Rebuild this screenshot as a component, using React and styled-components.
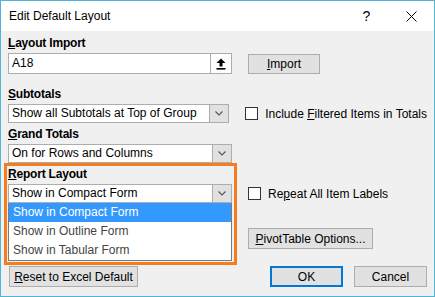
import React from 'react';
import styled, { createGlobalStyle } from 'styled-components';

const GlobalStyle = createGlobalStyle`
  html, body {
    margin: 0;
    padding: 0;
    background: #ffffff;
  }
  body {
    font-family: "Liberation Sans", Arial, sans-serif;
    font-size: 12px;
    color: #000;
  }
`;

const Dialog = styled.div`
  width: 435px;
  height: 297px;
  box-sizing: border-box;
  border: 1px solid #4fb4d8;
  background: #f0f0f0;
  display: flex;
  flex-direction: column;
`;

const TitleBar = styled.div`
  height: 30px;
  background: #ffffff;
  display: flex;
  align-items: center;
  padding-left: 8px;
  font-size: 12px;
`;

const Title = styled.span`
  flex: 1;
  color: #000;
`;

const TitleButton = styled.div`
  width: 45px;
  height: 30px;
  display: flex;
  align-items: center;
  justify-content: center;
  font-size: 14px;
  color: #000;
`;

const Body = styled.div`
  flex: 1;
  padding: 5px 7px 0 7px;
  display: flex;
  flex-direction: column;
`;

const Label = styled.div`
  font-weight: 700;
  line-height: 15px;
  margin-top: ${p => p.$top || 0}px;
  margin-bottom: 2px;
  letter-spacing: -0.2px;
`;

const Row = styled.div`
  display: flex;
  align-items: center;
`;

const Field = styled.div`
  width: 224px;
  height: 21px;
  box-sizing: border-box;
  border: 1px solid #abadb3;
  background: #fff;
  display: flex;
`;

const FieldText = styled.div`
  flex: 1;
  padding-left: 3px;
  line-height: 19px;
`;

const RefButton = styled.div`
  width: 21px;
  height: 19px;
  box-sizing: border-box;
  border-left: 1px solid #adadad;
  background: #fdfdfd;
  display: flex;
  align-items: center;
  justify-content: center;
`;

const Button = styled.div`
  width: ${p => p.$w}px;
  height: ${p => p.$h || 21}px;
  box-sizing: border-box;
  border: ${p => (p.$default ? '2px solid #0078d7' : '1px solid #adadad')};
  background: #e1e1e1;
  display: flex;
  align-items: center;
  justify-content: center;
  margin-left: ${p => p.$ml || 0}px;
  margin-top: ${p => p.$mt || 0}px;
  white-space: nowrap;
`;

const Select = styled.div`
  width: 224px;
  height: 19px;
  box-sizing: border-box;
  border: 1px solid #adadad;
  background: #fff;
  display: flex;
`;

const SelectText = styled.div`
  flex: 1;
  padding-left: 3px;
  line-height: 17px;
  white-space: nowrap;
  overflow: hidden;
`;

const Arrow = styled.div`
  width: 19px;
  height: 17px;
  box-sizing: border-box;
  border-left: 1px solid #adadad;
  background: #e1e1e1;
  display: flex;
  align-items: center;
  justify-content: center;
`;

const Check = styled.label`
  display: flex;
  align-items: center;
  gap: 7px;
  margin-left: ${p => p.$ml || 0}px;
  height: 19px;
  white-space: nowrap;
`;

const Box = styled.span`
  width: 13px;
  height: 13px;
  box-sizing: border-box;
  border: 1px solid #333;
  background: #fff;
`;

const ReportRow = styled.div`
  display: flex;
  align-items: flex-start;
`;

const Highlight = styled.div`
  width: 233px;
  box-sizing: border-box;
  margin-left: -4px;
  border: 3px solid #f57c1f;
  padding: 1px 2px 1px 1px;
`;

const List = styled.div`
  width: 224px;
  box-sizing: border-box;
  border: 1px solid #7a7a7a;
  border-top: none;
  background: #fff;
`;

const Item = styled.div`
  height: 19px;
  line-height: 19px;
  padding-left: 4px;
  color: ${p => (p.$active ? '#fff' : '#444')};
  background: ${p => (p.$active ? '#3399ff' : 'transparent')};
`;

const Side = styled.div`
  margin-left: 11px;
  padding-top: 21px;
  display: flex;
  flex-direction: column;
  align-items: flex-start;
`;

const Footer = styled.div`
  display: flex;
  align-items: center;
  margin-top: 1px;
`;

const Spacer = styled.div`
  flex: 1;
`;

const Chevron = () => (
  <svg width="8" height="5" viewBox="0 0 8 5">
    <path d="M0.5 0.5 L4 4 L7.5 0.5" fill="none" stroke="#555" strokeWidth="1.1" />
  </svg>
);

const UpIcon = () => (
  <svg width="10" height="12" viewBox="0 0 10 12">
    <path d="M5 0.5 L9.5 5 L6.5 5 L6.5 8.5 L3.5 8.5 L3.5 5 L0.5 5 Z" fill="#000" />
    <rect x="0.5" y="10" width="9" height="1.6" fill="#000" />
  </svg>
);

const CloseIcon = () => (
  <svg width="11" height="11" viewBox="0 0 11 11">
    <path d="M0.5 0.5 L10.5 10.5 M10.5 0.5 L0.5 10.5" stroke="#000" strokeWidth="1" />
  </svg>
);

const Dropdown = ({ children }) => (
  <Select>
    <SelectText>{children}</SelectText>
    <Arrow><Chevron /></Arrow>
  </Select>
);

export default function App() {
  return (
    <>
      <GlobalStyle />
      <Dialog>
        <TitleBar>
          <Title>Edit Default Layout</Title>
          <TitleButton>?</TitleButton>
          <TitleButton><CloseIcon /></TitleButton>
        </TitleBar>
        <Body>
          <Label><u>L</u>ayout Import</Label>
          <Row>
            <Field>
              <FieldText>A18</FieldText>
              <RefButton><UpIcon /></RefButton>
            </Field>
            <Button $w={72} $h={20} $ml={16}><span><u>I</u>mport</span></Button>
          </Row>

          <Label $top={13}><u>S</u>ubtotals</Label>
          <Row>
            <Dropdown>Show all Subtotals at Top of Group</Dropdown>
            <Check $ml={16}><Box /><span>Include <u>F</u>iltered Items in Totals</span></Check>
          </Row>

          <Label $top={4}><u>G</u>rand Totals</Label>
          <Row>
            <Dropdown>On for Rows and Columns</Dropdown>
          </Row>

          <ReportRow>
            <Highlight>
              <Label><u>R</u>eport Layout</Label>
              <Dropdown>Show in Compact Form</Dropdown>
              <List>
                <Item $active>Show in Compact Form</Item>
                <Item>Show in Outline Form</Item>
                <Item>Show in Tabular Form</Item>
              </List>
            </Highlight>
            <Side>
              <Check><Box /><span>Re<u>p</u>eat All Item Labels</span></Check>
              <Button $w={125} $mt={25}><span><u>P</u>ivotTable Options...</span></Button>
            </Side>
          </ReportRow>

          <Footer>
            <Button $w={129} $ml={1}><span><u>R</u>eset to Excel Default</span></Button>
            <Spacer />
            <Button $w={73} $default>OK</Button>
            <Button $w={73} $ml={11}>Cancel</Button>
          </Footer>
        </Body>
      </Dialog>
    </>
  );
}
